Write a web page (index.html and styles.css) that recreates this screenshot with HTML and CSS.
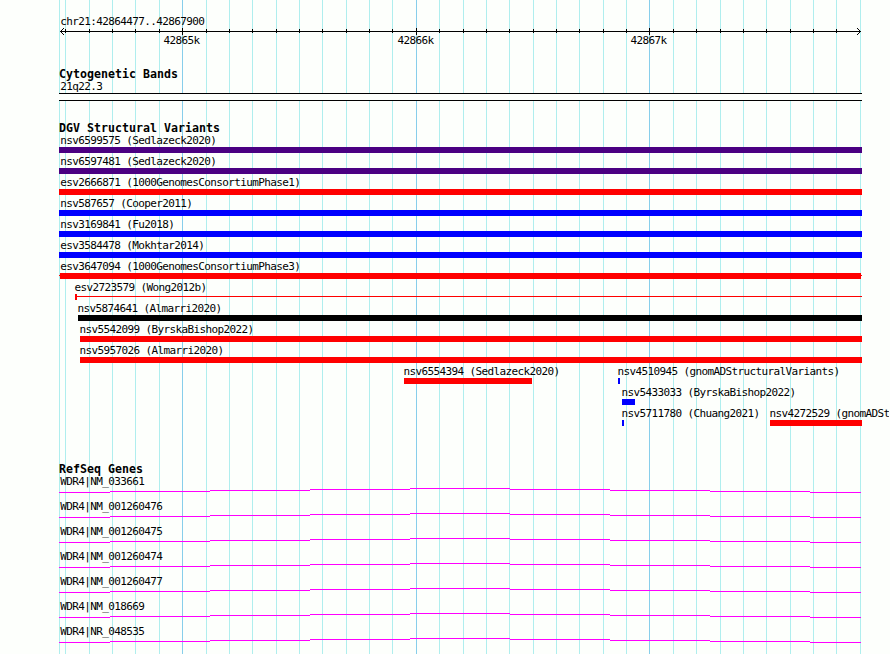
FILE: index.html
```
<!DOCTYPE html>
<html lang="en">
<head>
    <meta charset="UTF-8">
    <title>chr21:42864477..42867900</title>
    <link rel="stylesheet" href="styles.css">
</head>
<body>
<div class="panel">
    <svg class="grid" width="889" height="654" shape-rendering="crispEdges">
        <path class="minor" d="M59.5 0V654M65.5 0V654M89.5 0V654M112.5 0V654M135.5 0V654M159.5 0V654M206.5 0V654M229.5 0V654M252.5 0V654M276.5 0V654M299.5 0V654M322.5 0V654M346.5 0V654M369.5 0V654M392.5 0V654M439.5 0V654M463.5 0V654M486.5 0V654M509.5 0V654M533.5 0V654M556.5 0V654M579.5 0V654M603.5 0V654M626.5 0V654M673.5 0V654M696.5 0V654M720.5 0V654M743.5 0V654M766.5 0V654M790.5 0V654M813.5 0V654M836.5 0V654M860.5 0V654"/>
        <path class="major" d="M182.5 0V654M416.5 0V654M649.5 0V654"/>
    </svg>

    <div class="track region">
        <div class="label">chr21:42864477..42867900</div>
        <svg class="ruler" width="803" height="19" viewBox="59 28 803 19">
            <g shape-rendering="crispEdges">
                <path d="M60 31.5H861"/>
                <path d="M65.5 29V33M89.5 29V33M112.5 29V33M135.5 29V33M159.5 29V33M206.5 29V33M229.5 29V33M252.5 29V33M276.5 29V33M299.5 29V33M322.5 29V33M346.5 29V33M369.5 29V33M392.5 29V33M439.5 29V33M463.5 29V33M486.5 29V33M509.5 29V33M533.5 29V33M556.5 29V33M579.5 29V33M603.5 29V33M626.5 29V33M673.5 29V33M696.5 29V33M720.5 29V33M743.5 29V33M766.5 29V33M790.5 29V33M813.5 29V33M836.5 29V33"/>
                <path d="M182.5 28V35M416.5 28V35M649.5 28V35"/>
                <path d="M63 28.5h1M62 29.5h1M61 30.5h1M61 32.5h1M62 33.5h1M63 34.5h1"/>
                <path d="M857 28.5h1M858 29.5h1M859 30.5h1M859 32.5h1M858 33.5h1M857 34.5h1"/>
            </g>
            <text x="163.5" y="44">42865k</text>
            <text x="397.5" y="44">42866k</text>
            <text x="630.5" y="44">42867k</text>
        </svg>
    </div>

    <div class="track bands">
        <h2>Cytogenetic Bands</h2>
        <div class="label">21q22.3</div>
        <div class="band"></div>
    </div>

    <div class="track variants">
        <h2>DGV Structural Variants</h2>
        <div class="row"><div class="feature full indigo"><div class="label">nsv6599575 (Sedlazeck2020)</div></div></div>
        <div class="row"><div class="feature full indigo"><div class="label">nsv6597481 (Sedlazeck2020)</div></div></div>
        <div class="row"><div class="feature full red"><div class="label">esv2666871 (1000GenomesConsortiumPhase1)</div></div></div>
        <div class="row"><div class="feature full blue"><div class="label">nsv587657 (Cooper2011)</div></div></div>
        <div class="row"><div class="feature full blue"><div class="label">nsv3169841 (Fu2018)</div></div></div>
        <div class="row"><div class="feature full blue"><div class="label">esv3584478 (Mokhtar2014)</div></div></div>
        <div class="row"><div class="feature full capped red"><div class="label">esv3647094 (1000GenomesConsortiumPhase3)</div></div></div>
        <div class="row"><div class="feature thin red" style="margin-left: 16px; width: 787px"><div class="label">esv2723579 (Wong2012b)</div></div></div>
        <div class="row"><div class="feature black" style="margin-left: 19px; width: 784px"><div class="label">nsv5874641 (Almarri2020)</div></div></div>
        <div class="row"><div class="feature red" style="margin-left: 21px; width: 782px"><div class="label">nsv5542099 (ByrskaBishop2022)</div></div></div>
        <div class="row"><div class="feature red" style="margin-left: 21px; width: 782px"><div class="label">nsv5957026 (Almarri2020)</div></div></div>
        <div class="row">
            <div class="feature red" style="margin-left: 345px; width: 128px"><div class="label">nsv6554394 (Sedlazeck2020)</div></div>
            <div class="feature blue" style="margin-left: 86px; width: 2px"><div class="label">nsv4510945 (gnomADStructuralVariants)</div></div>
        </div>
        <div class="row"><div class="feature blue" style="margin-left: 563px; width: 13px"><div class="label">nsv5433033 (ByrskaBishop2022)</div></div></div>
        <div class="row">
            <div class="feature blue" style="margin-left: 563px; width: 2px"><div class="label">nsv5711780 (Chuang2021)</div></div>
            <div class="feature red" style="margin-left: 146px; width: 92px"><div class="label">nsv4272529 (gnomADSt</div></div>
        </div>
    </div>

    <svg width="0" height="0" class="defs">
        <defs>
            <path id="intron" d="M0 4.5H51M51 3.5H151M151 2.5H251M251 1.5H351M351 .5H451M451 1.5H551M551 2.5H651M651 3.5H751M751 4.5H802"/>
        </defs>
    </svg>

    <div class="track genes">
        <h2>RefSeq Genes</h2>
        <div class="gene"><div class="label">WDR4|NM_033661</div><svg class="intron"><use href="#intron"/></svg></div>
        <div class="gene"><div class="label">WDR4|NM_001260476</div><svg class="intron"><use href="#intron"/></svg></div>
        <div class="gene"><div class="label">WDR4|NM_001260475</div><svg class="intron"><use href="#intron"/></svg></div>
        <div class="gene"><div class="label">WDR4|NM_001260474</div><svg class="intron"><use href="#intron"/></svg></div>
        <div class="gene"><div class="label">WDR4|NM_001260477</div><svg class="intron"><use href="#intron"/></svg></div>
        <div class="gene"><div class="label">WDR4|NM_018669</div><svg class="intron"><use href="#intron"/></svg></div>
        <div class="gene"><div class="label">WDR4|NR_048535</div><svg class="intron"><use href="#intron"/></svg></div>
    </div>
</div>
</body>
</html>
```

FILE: styles.css
```
body {
    margin: 0;
    background-color: #fdfffc;
    color: #000;
    font-family: "DejaVu Sans Mono", monospace;
    font-size: 11px;
    letter-spacing: -0.62px;
}
.panel {
    position: relative;
    box-sizing: border-box;
    width: 889px;
    height: 654px;
    padding: 15px 27px 0 59px;
    overflow: hidden;
}
svg {
    display: block;
    fill: none;
}
/* grid lines run behind every track */
.grid {
    position: absolute;
    top: 0;
    left: 0;
}
.minor {
    stroke: #afeeee;
}
.major {
    stroke: #87ceeb;
}
.defs {
    position: absolute;
}
.track {
    position: relative;
    width: 803px;
}
h2 {
    height: 15px;
    margin: 0;
    font-size: 11.6px;
    font-weight: bold;
    line-height: 18px;
    letter-spacing: 0.016px;
    white-space: nowrap;
}
.label {
    height: 13px;
    padding-left: 1.2px;
    line-height: 13px;
    white-space: nowrap;
}
.ruler path {
    stroke: #000;
}
.ruler text {
    fill: #000;
}
.bands {
    margin-top: 18px;
}
.band {
    box-sizing: border-box;
    height: 8px;
    border-top: 1px solid #000;
    border-bottom: 1px solid #000;
    background-color: #fdfffc;
}
.variants {
    margin-top: 18px;
}
.row {
    display: flex;
    height: 21px;
}
.feature {
    flex: none;
}
.feature .label {
    padding-left: 0;
    margin-left: -0.6px;
    color: #000;
}
.feature.full .label {
    margin-left: 1.2px;
}
.feature::after {
    content: "";
    display: block;
    box-sizing: border-box;
    height: 6px;
    background-color: currentColor;
}
.full {
    width: 803px;
}
/* bar inset by 1px, with the connector line showing at both ends */
.capped::after {
    border: solid transparent;
    border-width: 0 1px;
    background: linear-gradient(currentColor, currentColor) 0 0 / 100% 100% no-repeat padding-box,
        linear-gradient(currentColor, currentColor) 0 2px / 100% 1px no-repeat border-box;
}
.thin::after {
    border-left: 2px solid;
    background: linear-gradient(currentColor, currentColor) 0 2px / 100% 1px no-repeat;
}
.indigo {
    color: #4b0082;
}
.red {
    color: #f00;
}
.blue {
    color: #00f;
}
.black {
    color: #000;
}
.genes {
    margin-top: 32px;
}
.gene {
    height: 25px;
}
.intron {
    width: 803px;
    height: 5px;
    stroke: #f0f;
    shape-rendering: crispEdges;
}
```
